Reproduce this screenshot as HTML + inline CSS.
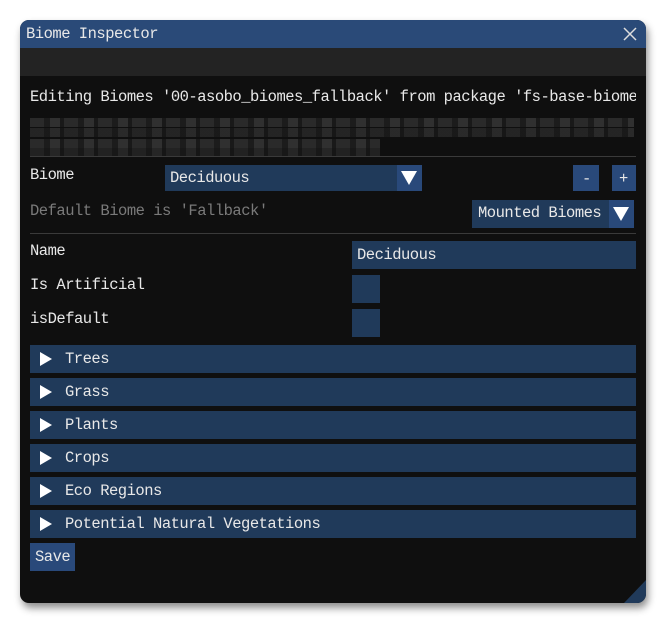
<!DOCTYPE html>
<html><head><style>
body{margin:0;background:#fff;width:666px;height:622px;position:relative;overflow:hidden;font-family:"Liberation Mono",monospace;font-size:15.5px;letter-spacing:-0.5px;color:#e8e8e8}
.win{position:absolute;left:20px;top:20px;width:626px;height:583px;background:#0f0f0f;border-radius:9px;overflow:hidden;box-shadow:2px 5px 8px rgba(0,0,0,.45)}
.title{position:absolute;left:0;top:0;right:0;height:28px;background:#2a4a78}
.a{position:absolute;white-space:nowrap}
.band{position:absolute;left:0;top:28px;right:0;height:28px;background:#232323}
.blue{position:absolute;background:#203a5a}
.btn{position:absolute;background:#29497a}
.hdr{position:absolute;left:10px;width:606px;height:28px;background:#203a5a}
.hdr .t{position:absolute;left:35px;top:5px}
.tri{position:absolute;left:10px;top:7px;width:0;height:0;border-left:12px solid #fff;border-top:7px solid transparent;border-bottom:7px solid transparent}
.dn{position:absolute;width:0;height:0;border-top:14px solid #fff;border-left:8px solid transparent;border-right:8px solid transparent}
.sep{position:absolute;left:10px;width:606px;height:1px;background:#3a3a3a}
.blur{position:absolute;height:9px;background:repeating-linear-gradient(90deg,#2a2a2a 0 14px,#1c1c1c 14px 20px,#303030 20px 30px,#191919 30px 34px)}
</style></head><body>
<div class="win">
<div class="title"><span class="a" style="left:6px;top:5px">Biome Inspector</span>
<svg class="a" style="left:603px;top:7px" width="14" height="14"><path d="M1 1L13 13M13 1L1 13" stroke="#ddd" stroke-width="1.5"/></svg></div>
<div class="band"></div>
<div class="a" style="left:10px;top:68px;width:606px;overflow:hidden">Editing Biomes '00-asobo_biomes_fallback' from package 'fs-base-biomes</div>
<div class="blur" style="left:10px;top:98px;width:604px"></div>
<div class="blur" style="left:10px;top:108px;width:604px;opacity:.8"></div>
<div class="blur" style="left:10px;top:119px;width:350px"></div>
<div class="blur" style="left:10px;top:128px;width:350px;opacity:.7"></div>
<div class="sep" style="top:136px"></div>
<span class="a" style="left:10px;top:146px">Biome</span>
<div class="blue" style="left:145px;top:145px;width:257px;height:26px"></div>
<div class="btn" style="left:377px;top:145px;width:25px;height:26px"><div class="dn" style="left:4px;top:6px"></div></div>
<span class="a" style="left:150px;top:149px">Deciduous</span>
<div class="btn" style="left:553px;top:145px;width:26px;height:26px"><span class="a" style="left:9px;top:5px">-</span></div>
<div class="btn" style="left:592px;top:145px;width:24px;height:26px"><span class="a" style="left:7px;top:5px">+</span></div>
<span class="a" style="left:10px;top:182px;color:#7a7a7a">Default Biome is 'Fallback'</span>
<div class="blue" style="left:452px;top:180px;width:162px;height:28px"></div>
<span class="a" style="left:458px;top:184px">Mounted Biomes</span>
<div class="btn" style="left:589px;top:180px;width:25px;height:28px"><div class="dn" style="left:4px;top:7px"></div></div>
<div class="sep" style="top:213px"></div>
<span class="a" style="left:10px;top:222px">Name</span>
<div class="blue" style="left:332px;top:221px;width:284px;height:28px"></div>
<span class="a" style="left:337px;top:226px">Deciduous</span>
<span class="a" style="left:10px;top:256px">Is Artificial</span>
<div class="blue" style="left:332px;top:255px;width:28px;height:28px"></div>
<span class="a" style="left:10px;top:290px">isDefault</span>
<div class="blue" style="left:332px;top:289px;width:28px;height:28px"></div>
<div class="hdr" style="top:325px"><div class="tri"></div><span class="t">Trees</span></div>
<div class="hdr" style="top:358px"><div class="tri"></div><span class="t">Grass</span></div>
<div class="hdr" style="top:391px"><div class="tri"></div><span class="t">Plants</span></div>
<div class="hdr" style="top:424px"><div class="tri"></div><span class="t">Crops</span></div>
<div class="hdr" style="top:457px"><div class="tri"></div><span class="t">Eco Regions</span></div>
<div class="hdr" style="top:490px"><div class="tri"></div><span class="t">Potential Natural Vegetations</span></div>
<div class="btn" style="left:10px;top:523px;width:45px;height:28px"><span class="a" style="left:5px;top:5px">Save</span></div>
<svg class="a" style="left:604px;top:560px" width="22" height="23"><path d="M22 0L22 23L0 23Z" fill="#203a5a"/></svg>
</div>
</body></html>
